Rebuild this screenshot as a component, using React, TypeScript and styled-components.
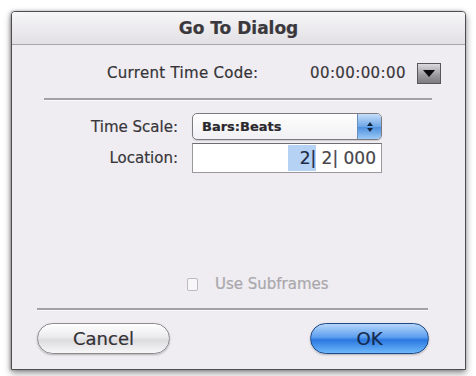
import styled, { createGlobalStyle } from "styled-components";

const Global = createGlobalStyle`
  html, body {
    margin: 0;
    padding: 0;
    background: #ffffff;
  }
  body {
    font-family: "DejaVu Sans", "Liberation Sans", sans-serif;
    color: #2e2c30;
    -webkit-text-stroke: 0.2px;
  }
`;

const Page = styled.div`
  width: 476px;
  height: 376px;
  padding: 11px 0 0 11px;
  box-sizing: border-box;
`;

const Window = styled.div`
  width: 455px;
  height: 359px;
  box-sizing: border-box;
  border: 1px solid #4f4d52;
  border-radius: 4px 4px 0 0;
  background: #efedf1;
  box-shadow: 0 3px 7px rgba(0, 0, 0, 0.45), -1px 0 3px rgba(0, 0, 0, 0.25);
  display: flex;
  flex-direction: column;
  overflow: hidden;
`;

const TitleBar = styled.div`
  height: 32px;
  flex: none;
  display: flex;
  align-items: center;
  justify-content: center;
  background: linear-gradient(#f6f5f7, #e2e0e4);
  border-bottom: 1px solid #a8a6aa;
  font-size: 17px;
  font-weight: bold;
  color: #3a383c;
`;

const Body = styled.div`
  flex: 1;
  display: flex;
  flex-direction: column;
  padding: 17px 0 0;
`;

const TimeCodeRow = styled.div`
  display: flex;
  align-items: center;
  height: 22px;
  padding-left: 95px;
  font-size: 15px;
`;

const TimeCodeLabel = styled.span`
  width: 203px;
  color: #353337;
  letter-spacing: 0.3px;
`;

const TimeCodeValue = styled.span`
  width: 107px;
  color: #3a383c;
  font-size: 15px;
  letter-spacing: 0.4px;
`;

const MenuButton = styled.div`
  width: 24px;
  height: 21px;
  box-sizing: border-box;
  border: 1px solid #58565b;
  background: linear-gradient(#dcdadf, #9a989d 60%, #7d7b80);
  display: flex;
  align-items: center;
  justify-content: center;
`;

const Rule = styled.div<{ $left: number; $width: number; $top: number }>`
  margin: ${({ $top }) => $top}px 0 0 ${({ $left }) => $left}px;
  width: ${({ $width }) => $width}px;
  height: 2px;
  background: #a3a1a5;
  border-bottom: 1px solid #f9f8fa;
`;

const Form = styled.div`
  display: grid;
  grid-template-columns: 166px 190px;
  column-gap: 14px;
  row-gap: 3px;
  margin-top: 12px;
  font-size: 15px;
`;

const Label = styled.div`
  text-align: right;
  align-self: center;
  color: #38363a;
`;

const Select = styled.div`
  height: 27px;
  box-sizing: border-box;
  border: 1px solid #7d7b80;
  border-radius: 5px;
  background: linear-gradient(#ffffff, #f0eff2);
  display: flex;
  align-items: center;
  justify-content: space-between;
  padding-left: 9px;
  overflow: hidden;
  box-shadow: 0 1px 1px rgba(0, 0, 0, 0.15);
`;

const SelectText = styled.span`
  font-size: 13px;
  color: #2a282c;
  font-weight: bold;
`;

const Stepper = styled.div`
  width: 23px;
  height: 100%;
  background: linear-gradient(#c6def8, #6ea7e8 50%, #4a8ddf 51%, #9ccaf5);
  border-left: 1px solid #6a8fbf;
  display: flex;
  align-items: center;
  justify-content: center;
`;

const Field = styled.div`
  height: 30px;
  box-sizing: border-box;
  border: 1px solid #9a989c;
  border-top-color: #6f6d72;
  background: #ffffff;
  display: flex;
  align-items: center;
  justify-content: flex-end;
  padding-right: 5px;
  font-size: 17px;
  color: #48464b;
  white-space: pre;
`;

const Selected = styled.span`
  background: #b5d1f4;
  color: #1c2a45;
  padding: 3px 0 3px 12px;
`;

const Spacer = styled.div`
  flex: 1;
`;

const CheckRow = styled.label`
  display: flex;
  align-items: center;
  gap: 17px;
  padding-left: 175px;
  font-size: 15px;
  color: #a9a7ab;
`;

const Box = styled.span`
  width: 11px;
  height: 13px;
  box-sizing: border-box;
  border: 1px solid #bdbbbf;
  border-radius: 2px;
  background: #f7f6f8;
`;

const Buttons = styled.div`
  display: flex;
  justify-content: space-between;
  padding: 12px 36px 0 25px;
  height: 58px;
  box-sizing: border-box;
`;

const Button = styled.div<{ $primary?: boolean; $width: number }>`
  width: ${({ $width }) => $width}px;
  height: 31px;
  box-sizing: border-box;
  border-radius: 16px;
  display: flex;
  align-items: center;
  justify-content: center;
  font-size: 18px;
  border: 1px solid ${({ $primary }) => ($primary ? "#1f4a86" : "#8d8b90")};
  color: ${({ $primary }) => ($primary ? "#152a4c" : "#333135")};
  background: ${({ $primary }) =>
    $primary
      ? "linear-gradient(#b6d6fa, #5d9ff0 45%, #2a78e0 55%, #6fb8fb)"
      : "linear-gradient(#ffffff, #ebeaed 45%, #dcdbde 55%, #f7f7f8)"};
  box-shadow: 0 1px 2px rgba(0, 0, 0, 0.25);
`;

export default function App() {
  return (
    <Page>
      <Global />
      <Window>
        <TitleBar>Go To Dialog</TitleBar>
        <Body>
          <TimeCodeRow>
            <TimeCodeLabel>Current Time Code:</TimeCodeLabel>
            <TimeCodeValue>00:00:00:00</TimeCodeValue>
            <MenuButton>
              <svg width="14" height="9" viewBox="0 0 14 9">
                <path d="M1 1 L13 1 L7 8 Z" fill="#0c0c0e" />
              </svg>
            </MenuButton>
          </TimeCodeRow>
          <Rule $left={32} $width={388} $top={14} />
          <Form>
            <Label>Time Scale:</Label>
            <Select>
              <SelectText>Bars:Beats</SelectText>
              <Stepper>
                <svg width="8" height="12" viewBox="0 0 8 12">
                  <path d="M1 5 L4 1 L7 5 Z M1 7 L4 11 L7 7 Z" fill="#14253f" />
                </svg>
              </Stepper>
            </Select>
            <Label>Location:</Label>
            <Field>
              <Selected>2|</Selected>{" 2| 000"}
            </Field>
          </Form>
          <Spacer />
          <CheckRow>
            <Box />
            Use Subframes
          </CheckRow>
          <Rule $left={25} $width={391} $top={15} />
          <Buttons>
            <Button $width={133}>Cancel</Button>
            <Button $primary $width={119}>OK</Button>
          </Buttons>
        </Body>
      </Window>
    </Page>
  );
}
